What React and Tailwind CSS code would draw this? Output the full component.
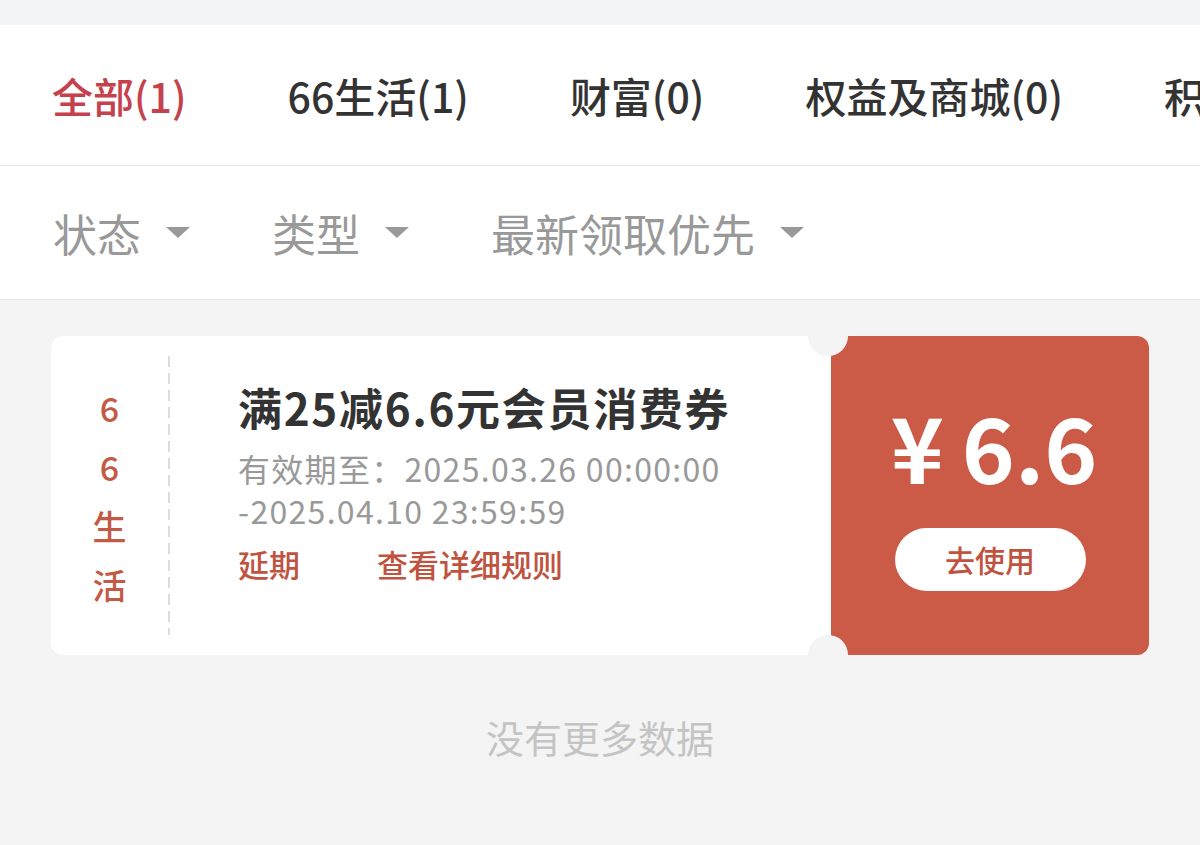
const FONT = { fontFamily: '"Noto Sans CJK SC", "Noto Sans", sans-serif' };

const tabs = [
    { label: "全部(1)", active: true },
    { label: "66生活(1)" },
    { label: "财富(0)" },
    { label: "权益及商城(0)" },
    { label: "积分(0)" },
];

const filters = ["状态", "类型", "最新领取优先"];

function Caret() {
    return (
        <svg width="24" height="11" viewBox="0 0 24 11" className="ml-[25px] shrink-0">
            <path d="M0 0h24L12 11z" fill="#999999" />
        </svg>
    );
}

export default function App() {
    return (
        <div style={FONT} className="w-[1200px] h-[845px] overflow-hidden bg-[#f4f4f4]">
            {/* top strip */}
            <div className="h-[25px] bg-[#f3f4f6]" />

            {/* category tabs */}
            <div className="h-[141px] bg-white border-b border-[#e5e5e5] flex items-center px-[52px] gap-[101px] overflow-hidden whitespace-nowrap">
                {tabs.map((t) => (
                    <span
                        key={t.label}
                        className={`text-[41px] leading-none font-medium ${t.active ? "text-[#c5414d]" : "text-[#333333]"}`}
                    >
                        {t.label}
                    </span>
                ))}
            </div>

            {/* filters */}
            <div className="h-[134px] bg-white border-b border-[#e5e5e5] flex items-center pl-[53px] gap-[82px]">
                {filters.map((f) => (
                    <div key={f} className="flex items-center">
                        <span className="text-[44px] leading-none text-[#999999]">{f}</span>
                        <Caret />
                    </div>
                ))}
            </div>

            {/* coupon card */}
            <div className="relative mx-[51px] mt-[36px] h-[319px] flex">
                <div className="flex-1 flex bg-white rounded-l-[12px]">
                    <div className="w-[117px] flex flex-col items-center justify-center text-[34px] leading-[59px] font-medium text-[#c25a45]">
                        <span>6</span>
                        <span>6</span>
                        <span>生</span>
                        <span>活</span>
                    </div>
                    <div className="w-[2px] my-[20px] bg-[repeating-linear-gradient(to_bottom,#dcdcdc_0_11px,transparent_11px_17px)]" />
                    <div className="pl-[68px] pt-[43px]">
                        <div className="text-[44px] leading-[56px] font-bold tracking-[1.7px] text-[#333333] whitespace-nowrap">
                            满25减6.6元会员消费券
                        </div>
                        <div className="mt-[12px] text-[32px] leading-[42px] tracking-[1.3px] text-[#999999] whitespace-nowrap">
                            <div>有效期至：2025.03.26 00:00:00</div>
                            <div>-2025.04.10 23:59:59</div>
                        </div>
                        <div className="mt-[12px] flex gap-[77px] text-[31px] leading-[42px] font-medium text-[#c0533f]">
                            <span>延期</span>
                            <span>查看详细规则</span>
                        </div>
                    </div>
                </div>
                <div className="w-[318px] bg-[#cb5a46] rounded-r-[12px] flex flex-col items-center pt-[64px]">
                    <div className="text-[90px] leading-[90px] font-bold text-white flex items-baseline gap-[18px] pl-[8px]">
                        <span>¥</span>
                        <span>6.6</span>
                    </div>
                    <button className="mt-[38px] w-[191px] h-[63px] rounded-full bg-white text-[30px] font-medium text-[#c0533f]">
                        去使用
                    </button>
                </div>

                {/* ticket notches */}
                <div className="absolute left-[757px] top-[-20px] w-[40px] h-[40px] rounded-full bg-[#f4f4f4]" />
                <div className="absolute left-[757px] bottom-[-20px] w-[40px] h-[40px] rounded-full bg-[#f4f4f4]" />
            </div>

            <div className="mt-[62px] text-center text-[38px] leading-[40px] text-[#c4c4c4]">没有更多数据</div>
        </div>
    );
}
